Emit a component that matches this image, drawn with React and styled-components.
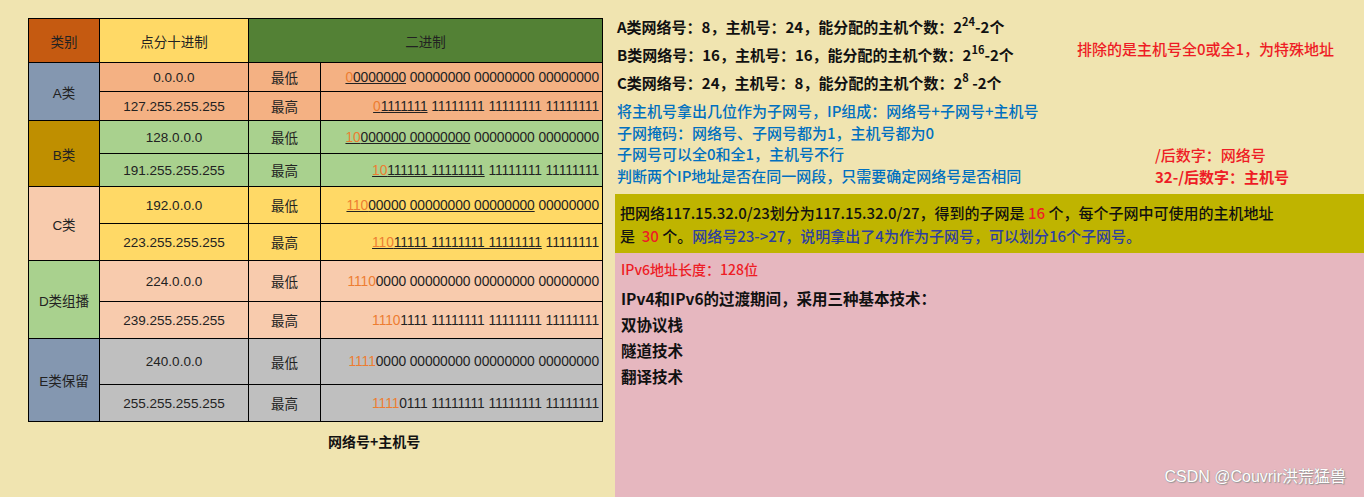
import React from "react";
import styled, { createGlobalStyle } from "styled-components";

const G = createGlobalStyle`
  html,body{margin:0;padding:0;background:#f0e4b0;}
  body{font-family:"Liberation Sans","Noto Sans CJK SC",sans-serif;}
`;
const Page = styled.div`display:flex;width:1364px;height:497px;overflow:hidden;`;
const Left = styled.div`width:615px;flex:none;padding:18px 0 0 28px;box-sizing:border-box;display:flex;flex-direction:column;`;
const Table = styled.table`border-collapse:collapse;width:574px;table-layout:fixed;font-size:13.5px;color:#222;
  td{border:1px solid #000;text-align:center;padding:0;box-sizing:border-box;}`;
const Cell = styled.td`background:${p => p.$bg};height:${p => p.$h}px;`;
const Bin = styled.td`background:${p => p.$bg};text-align:right !important;padding-right:3px !important;white-space:nowrap;font-size:13.8px;letter-spacing:-0.1px;`;
const Or = styled.span`color:#ed7d31;`;
const U = styled.span`text-decoration:underline;`;
const Caption = styled.div`font-weight:bold;font-size:14px;margin-top:9px;padding-left:300px;font-family:"Noto Sans CJK SC",sans-serif;color:#111;`;
const Right = styled.div`flex:none;width:749px;display:flex;flex-direction:column;`;
const Top = styled.div`height:194px;display:flex;padding:13px 0 0 2px;box-sizing:border-box;font-family:"Noto Sans CJK SC",sans-serif;`;
const Col = styled.div`display:flex;flex-direction:column;width:${p=>p.$w}px;`;
const BL = styled.div`font-weight:bold;font-size:15px;height:28px;line-height:28px;color:#111;
  sup{font-size:11px;vertical-align:baseline;position:relative;top:-7px;}`;
const Blue = styled.div`font-size:15px;height:21.7px;line-height:21.7px;color:#0070c0;font-weight:500;margin-top:${p=>p.$mt||0}px;`;
const Red = styled.div`color:#ee1c25;font-size:15px;font-weight:${p=>p.$b?"bold":"500"};margin-top:${p=>p.$mt||0}px;margin-left:${p=>p.$ml||0}px;line-height:22px;`;
const Olive = styled.div`height:59px;background:#bfb400;padding:7px 0 0 5px;box-sizing:border-box;font-size:15px;line-height:23px;font-family:"Noto Sans CJK SC",sans-serif;color:#111;font-weight:500;`;
const R = styled.span`color:#ee1c25;`;
const B = styled.span`color:#2e3fa0;`;
const Pink = styled.div`flex:1;background:#e6b7bf;padding:6px 0 0 6px;font-family:"Noto Sans CJK SC",sans-serif;position:relative;`;
const PRed = styled.div`color:#ee1c25;font-size:14px;font-weight:500;line-height:20px;margin-bottom:6px;`;
const PL = styled.div`font-size:15.5px;font-weight:bold;line-height:26px;color:#111;`;
const Mark = styled.div`position:absolute;right:18px;bottom:10px;color:#fff;font-size:16px;text-shadow:0 0 1px #888,1px 1px 1px #999;font-family:"Liberation Sans","Noto Sans CJK SC",sans-serif;`;

const rows = [
  ["A类","#8497b0","#f4b183",[29,29],[["0.0.0.0","最低",<><U><Or>0</Or>0000000</U> 00000000 00000000 00000000</>],["127.255.255.255","最高",<><U><Or>0</Or>1111111</U> 11111111 11111111 11111111</>]]],
  ["B类","#bf8f00","#a9d18e",[33,33],[["128.0.0.0","最低",<><U><Or>10</Or>000000 00000000</U> 00000000 00000000</>],["191.255.255.255","最高",<><U><Or>10</Or>111111 11111111</U> 11111111 11111111</>]]],
  ["C类","#f8cbad","#ffd966",[37,37],[["192.0.0.0","最低",<><U><Or>110</Or>00000 00000000 00000000</U> 00000000</>],["223.255.255.255","最高",<><U><Or>110</Or>11111 11111111 11111111</U> 11111111</>]]],
  ["D类组播","#a9d18e","#f8cbad",[41,37],[["224.0.0.0","最低",<><Or>1110</Or>0000 00000000 00000000 00000000</>],["239.255.255.255","最高",<><Or>1110</Or>1111 11111111 11111111 11111111</>]]],
  ["E类保留","#8497b0","#bfbfbf",[46,37],[["240.0.0.0","最低",<><Or>1111</Or>0000 00000000 00000000 00000000</>],["255.255.255.255","最高",<><Or>1111</Or>0111 11111111 11111111 11111111</>]]],
];

export default function App(){
  return <Page><G/>
    <Left>
      <Table>
        <colgroup><col width="71"/><col width="149"/><col width="72"/><col width="282"/></colgroup>
        <tbody>
          <tr><Cell $bg="#c55a11" $h={44}>类别</Cell><Cell $bg="#ffd966">点分十进制</Cell><Cell $bg="#538135" colSpan={2}>二进制</Cell></tr>
          {rows.map(([n,c,bg,hs,rs])=>rs.map((r,i)=><tr key={n+i}>
            {i===0&&<Cell rowSpan={2} $bg={c}>{n}</Cell>}
            <Cell $bg={bg} $h={hs[i]}>{r[0]}</Cell><Cell $bg={bg}>{r[1]}</Cell><Bin $bg={bg}>{r[2]}</Bin>
          </tr>))}
        </tbody>
      </Table>
      <Caption>网络号+主机号</Caption>
    </Left>
    <Right>
      <Top>
        <Col $w={460}>
          <BL>A类网络号：8，主机号：24，能分配的主机个数：2<sup>24</sup>-2个</BL>
          <BL>B类网络号：16，主机号：16，能分配的主机个数：2<sup>16</sup>-2个</BL>
          <BL>C类网络号：24，主机号：8，能分配的主机个数：2<sup>8</sup> -2个</BL>
          <Blue $mt={3}>将主机号拿出几位作为子网号，IP组成：网络号+子网号+主机号</Blue>
          <Blue>子网掩码：网络号、子网号都为1，主机号都为0</Blue>
          <Blue>子网号可以全0和全1，主机号不行</Blue>
          <Blue>判断两个IP地址是否在同一网段，只需要确定网络号是否相同</Blue>
        </Col>
        <Col $w={287}>
          <Red $mt={25}>排除的是主机号全0或全1，为特殊地址</Red>
          <Red $mt={84} $ml={78}>/后数字：网络号</Red>
          <Red $ml={78} $b>32-/后数字：主机号</Red>
        </Col>
      </Top>
      <Olive>
        <div>把网络117.15.32.0/23划分为117.15.32.0/27，得到的子网是 <R>16</R> 个，每个子网中可使用的主机地址</div>
        <div>是 &nbsp;<R>30</R> 个。<B>网络号23-&gt;27，说明拿出了4为作为子网号，可以划分16个子网号。</B></div>
      </Olive>
      <Pink>
        <PRed>IPv6地址长度：128位</PRed>
        <PL>IPv4和IPv6的过渡期间，采用三种基本技术：</PL>
        <PL>双协议栈</PL><PL>隧道技术</PL><PL>翻译技术</PL>
        <Mark>CSDN @Couvrir洪荒猛兽</Mark>
      </Pink>
    </Right>
  </Page>;
}
